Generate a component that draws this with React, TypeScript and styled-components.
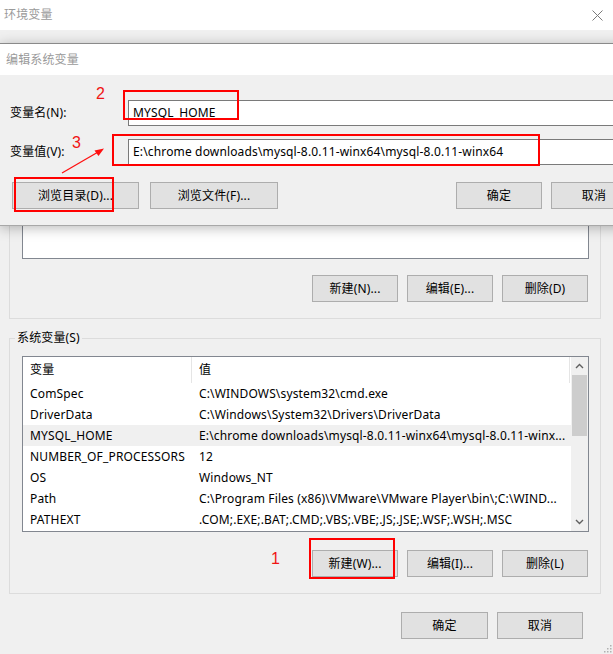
import React from 'react';
import styled, { createGlobalStyle } from 'styled-components';

const GlobalStyle = createGlobalStyle`
  html, body { margin: 0; padding: 0; background: #f0f0f0; overflow: hidden; }
  body {
    font-family: "Noto Sans", "Noto Sans CJK SC", sans-serif;
    font-size: 12px;
    letter-spacing: 0.15px;
    color: #000;
  }
  * { box-sizing: border-box; }
`;

const Screen = styled.div`
  position: relative;
  width: 613px;
  height: 654px;
  overflow: hidden;
  background: #f0f0f0;
  display: flex;
  flex-direction: column;
`;

const TitleBar = styled.div<{ $h: number; $pl: number }>`
  height: ${p => p.$h}px;
  flex-shrink: 0;
  background: #fff;
  display: flex;
  align-items: center;
  justify-content: space-between;
  padding: 0 10px 0 ${p => p.$pl}px;
  color: #9a9a9a;
  font-size: 12px;
  line-height: 16px;
`;

const OuterBody = styled.div`
  display: flex;
  flex-direction: column;
  padding: 0 12px 0 9px;
`;

const Group = styled.fieldset<{ $mt: number; $pt: number }>`
  margin: ${p => p.$mt}px 0 0 0;
  padding: ${p => p.$pt}px 11px 16px 12px;
  border: 1px solid #dcdcdc;
  min-width: 0;
  display: flex;
  flex-direction: column;
`;

const Legend = styled.legend`
  padding: 0 2px;
  margin-left: -7px;
  line-height: 16px;
  font-size: 12px;
  color: #000;
`;

const ListBox = styled.div<{ $h: number }>`
  height: ${p => p.$h}px;
  border: 1px solid #828790;
  background: #fff;
  display: flex;
`;

const ListTable = styled.div`
  flex: 1;
  min-width: 0;
  display: flex;
  flex-direction: column;
`;

const HeaderRow = styled.div`
  height: 26px;
  flex-shrink: 0;
  display: grid;
  grid-template-columns: 169px 378px;
`;

const HeaderCell = styled.div`
  display: flex;
  align-items: center;
  padding-left: 7px;
  border-right: 1px solid #e5e5e5;
  line-height: 16px;
`;

const Row = styled.div<{ $sel?: boolean }>`
  height: 21px;
  flex-shrink: 0;
  display: grid;
  grid-template-columns: 169px 378px;
  background: ${p => (p.$sel ? '#f0f0f0' : 'transparent')};
`;

const Cell = styled.div`
  display: flex;
  align-items: center;
  padding-left: 7px;
  white-space: nowrap;
  overflow: hidden;
  line-height: 16px;
`;

const ScrollBar = styled.div`
  width: 17px;
  flex-shrink: 0;
  background: #f0f0f0;
  display: flex;
  flex-direction: column;
`;

const ScrollBtn = styled.div`
  height: 18px;
  flex-shrink: 0;
  display: flex;
  align-items: center;
  justify-content: center;
`;

const Track = styled.div`
  flex: 1;
  display: flex;
  flex-direction: column;
  align-items: center;
`;

const Thumb = styled.div`
  width: 15px;
  height: 61px;
  background: #cdcdcd;
`;

const ButtonRow = styled.div<{ $mt: number; $pr?: number }>`
  margin-top: ${p => p.$mt}px;
  display: flex;
  justify-content: flex-end;
  gap: 9px;
  padding-right: ${p => p.$pr ?? 1}px;
`;

const Button = styled.div<{ $w: number }>`
  width: ${p => p.$w}px;
  height: 27px;
  border: 1px solid #adadad;
  background: #e1e1e1;
  display: flex;
  align-items: center;
  justify-content: center;
  line-height: 16px;
  white-space: nowrap;
  flex-shrink: 0;
`;

/* ---------- overlaid edit dialog ---------- */

const Dialog = styled.div`
  position: absolute;
  top: 43px;
  left: 0;
  width: 650px;
  border-top: 1px solid #8a8a8a;
  border-bottom: 1px solid #a8a8a8;
  box-shadow: 0 2px 12px rgba(0, 0, 0, 0.28);
  background: #f0f0f0;
  display: flex;
  flex-direction: column;
`;

const DialogBody = styled.div`
  padding: 25px 13px 16px 0;
  display: flex;
  flex-direction: column;
  gap: 13px;
`;

const FieldRow = styled.div`
  display: grid;
  grid-template-columns: 118px 1fr;
  align-items: center;
  padding-left: 10px;
`;

const Label = styled.label`
  line-height: 16px;
`;

const Input = styled.div`
  height: 26px;
  border: 1px solid #7a7a7a;
  background: #fff;
  display: flex;
  align-items: center;
  padding-left: 4px;
  white-space: nowrap;
  line-height: 16px;
`;

const DialogButtons = styled.div`
  margin-top: 4px;
  display: flex;
  align-items: center;
  padding-left: 12px;
  gap: 11px;
`;

const Spacer = styled.div`
  flex: 1;
`;

const RightPair = styled.div`
  display: flex;
  gap: 9px;
`;

/* ---------- annotations ---------- */

const RedBox = styled.div<{ $x: number; $y: number; $w: number; $h: number }>`
  position: absolute;
  left: ${p => p.$x}px;
  top: ${p => p.$y}px;
  width: ${p => p.$w}px;
  height: ${p => p.$h}px;
  border: 2px solid #ff0000;
  pointer-events: none;
`;

const Num = styled.span<{ $x: number; $y: number }>`
  position: absolute;
  left: ${p => p.$x}px;
  top: ${p => p.$y}px;
  font-family: "Liberation Sans", Arial, sans-serif;
  font-size: 16px;
  line-height: 16px;
  letter-spacing: 0;
  color: #f01414;
`;

const ArrowSvg = styled.svg`
  position: absolute;
  left: 0;
  top: 0;
  pointer-events: none;
`;

const Grip = styled.svg`
  position: absolute;
  right: 1px;
  bottom: 1px;
`;

const CloseIcon = () => (
  <svg width="11" height="11" viewBox="0 0 11 11">
    <path d="M0.5 0.5 L10.5 10.5 M10.5 0.5 L0.5 10.5" stroke="#7a7a7a" strokeWidth="1" fill="none" />
  </svg>
);

const Chevron = ({ up }: { up: boolean }) => (
  <svg width="9" height="6" viewBox="0 0 9 6">
    <path
      d={up ? 'M1 5 L4.5 1.5 L8 5' : 'M1 1 L4.5 4.5 L8 1'}
      stroke="#606060"
      strokeWidth="1.4"
      fill="none"
    />
  </svg>
);

type Var = { name: string; value: string; sel?: boolean };

const sysVars: Var[] = [
  { name: 'ComSpec', value: 'C:\\WINDOWS\\system32\\cmd.exe' },
  { name: 'DriverData', value: 'C:\\Windows\\System32\\Drivers\\DriverData' },
  { name: 'MYSQL_HOME', value: 'E:\\chrome downloads\\mysql-8.0.11-winx64\\mysql-8.0.11-winx...', sel: true },
  { name: 'NUMBER_OF_PROCESSORS', value: '12' },
  { name: 'OS', value: 'Windows_NT' },
  { name: 'Path', value: 'C:\\Program Files (x86)\\VMware\\VMware Player\\bin\\;C:\\WIND...' },
  { name: 'PATHEXT', value: '.COM;.EXE;.BAT;.CMD;.VBS;.VBE;.JS;.JSE;.WSF;.WSH;.MSC' },
];

export default function App() {
  return (
    <Screen>
      <GlobalStyle />
      <TitleBar $h={30} $pl={4}>
        <span>环境变量</span>
        <CloseIcon />
      </TitleBar>

      <OuterBody>
        {/* user variables group: its upper part lies under the edit dialog */}
        <Group $mt={20} $pt={20}>
          <ListBox $h={188} />
          <ButtonRow $mt={16}>
            <Button $w={86}>新建(N)...</Button>
            <Button $w={86}>编辑(E)...</Button>
            <Button $w={86}>删除(D)</Button>
          </ButtonRow>
        </Group>

        <Group $mt={11} $pt={10}>
          <Legend>系统变量(S)</Legend>
          <ListBox $h={176}>
            <ListTable>
              <HeaderRow>
                <HeaderCell>变量</HeaderCell>
                <HeaderCell>值</HeaderCell>
              </HeaderRow>
              {sysVars.map(v => (
                <Row key={v.name} $sel={v.sel}>
                  <Cell>{v.name}</Cell>
                  <Cell>{v.value}</Cell>
                </Row>
              ))}
            </ListTable>
            <ScrollBar>
              <ScrollBtn>
                <Chevron up />
              </ScrollBtn>
              <Track>
                <Thumb />
              </Track>
              <ScrollBtn>
                <Chevron up={false} />
              </ScrollBtn>
            </ScrollBar>
          </ListBox>
          <ButtonRow $mt={18}>
            <Button $w={86}>新建(W)...</Button>
            <Button $w={86}>编辑(I)...</Button>
            <Button $w={86}>删除(L)</Button>
          </ButtonRow>
        </Group>

        <ButtonRow $mt={18} $pr={18}>
          <Button $w={87}>确定</Button>
          <Button $w={86}>取消</Button>
        </ButtonRow>
      </OuterBody>

      <Grip width="10" height="10" viewBox="0 0 10 10">
        {[
          [8, 2],
          [5, 5],
          [8, 5],
          [2, 8],
          [5, 8],
          [8, 8],
        ].map(([x, y]) => (
          <rect key={`${x}-${y}`} x={x} y={y} width="1.5" height="1.5" fill="#b0b0b0" />
        ))}
      </Grip>

      <Dialog>
        <TitleBar $h={31} $pl={6}>
          <span>编辑系统变量</span>
        </TitleBar>
        <DialogBody>
          <FieldRow>
            <Label>变量名(N):</Label>
            <Input>MYSQL_HOME</Input>
          </FieldRow>
          <FieldRow>
            <Label>变量值(V):</Label>
            <Input>E:\chrome downloads\mysql-8.0.11-winx64\mysql-8.0.11-winx64</Input>
          </FieldRow>
          <DialogButtons>
            <Button $w={127}>浏览目录(D)...</Button>
            <Button $w={128}>浏览文件(F)...</Button>
            <Spacer />
            <RightPair>
              <Button $w={86}>确定</Button>
              <Button $w={86}>取消</Button>
            </RightPair>
          </DialogButtons>
        </DialogBody>
      </Dialog>

      <RedBox $x={123} $y={90} $w={116} $h={30} />
      <RedBox $x={112} $y={134} $w={428} $h={32} />
      <RedBox $x={14} $y={177} $w={100} $h={35} />
      <RedBox $x={309} $y={538} $w={86} $h={41} />
      <Num $x={96} $y={86}>2</Num>
      <Num $x={72} $y={135}>3</Num>
      <Num $x={271} $y={551}>1</Num>
      <ArrowSvg width="613" height="654" viewBox="0 0 613 654">
        <line x1="62" y1="173" x2="99" y2="151.5" stroke="#ff1010" strokeWidth="1.3" />
        <polygon points="104,148.5 94.5,150.5 98.5,156" fill="#ff1010" />
      </ArrowSvg>
    </Screen>
  );
}
